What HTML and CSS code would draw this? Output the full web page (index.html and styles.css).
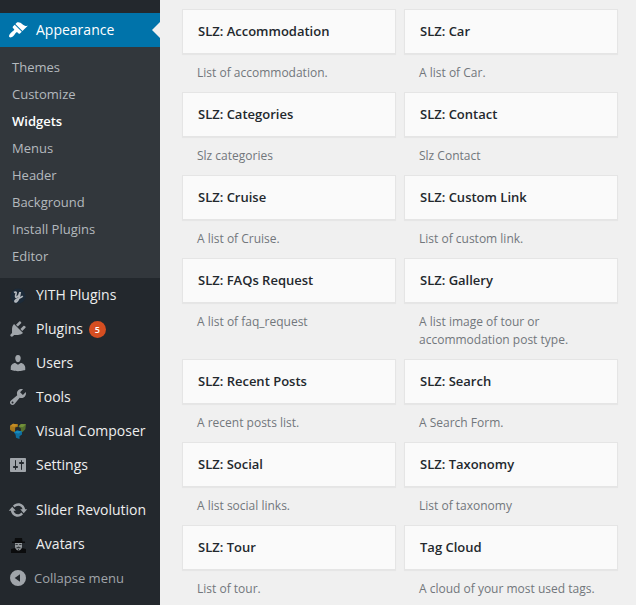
FILE: index.html
```html
<!DOCTYPE html>
<html lang="en">
<head>
<meta charset="utf-8">
<title>Widgets</title>
<link rel="stylesheet" href="styles.css">
</head>
<body>
<nav class="sidebar">
  <a class="item current"><svg class="icon" viewBox="0 0 20 20"><path d="M14.48 11.06L7.41 3.99l1.5-1.5c.5-.56 2.3-.47 3.51.32 1.21.8 1.43 1.28 2.91 2.1 1.18.64 2.45 1.26 4.45.85zm-.71.71L6.7 4.7 4.93 6.47c-.39.39-.39 1.02 0 1.41l1.06 1.06c.39.39.39 1.03 0 1.42-.6.6-1.43 1.11-2.21 1.69-.35.26-.7.53-1.01.84C1.43 14.23.4 16.08 1.4 17.07c.99 1 2.84-.03 4.18-1.36.31-.31.58-.66.85-1.02.57-.78 1.08-1.61 1.69-2.21.39-.39 1.02-.39 1.41 0l1.06 1.06c.39.39 1.02.39 1.41 0z"/></svg>Appearance</a>
  <div class="submenu">
    <a>Themes</a><a>Customize</a><a class="active">Widgets</a><a>Menus</a><a>Header</a><a>Background</a><a>Install Plugins</a><a>Editor</a>
  </div>
  <a class="item"><svg class="icon" viewBox="0 0 20 20"><circle cx="10" cy="11" r="7.6" fill="#1c2a38"/><path d="M6 7.6c1.8-1 2.6-.4 2 1.500-.8 2.600-.5 3.700 1 3 1.500-.7 2.500-2.600 3-4.800M12.300 7c-.5 3.600-1.300 8.400-3.800 9.700-1.700.8-2.200-.7-.7-1.800 2-1.400 4.500-1.600 7-3.800" fill="none" stroke="#b4b9be" stroke-width="1.700"/></svg>YITH Plugins</a>
  <a class="item"><svg class="icon" viewBox="0 0 20 20"><path d="M13.110 4.360L9.870 7.600 8 5.730l3.240-3.240c.35-.34 1.050-.2 1.560.32.52.51.66 1.210.31 1.550zm-8 1.770l.91-1.120 9.010 9.010-1.190.84c-.71.71-2.630 1.160-3.820 1.160H6.140L4.900 17.260c-.59.59-1.540.59-2.120 0-.59-.58-.59-1.530 0-2.120l1.240-1.240v-3.880c0-1.130.4-3.190 1.090-3.890zm7.260 3.970l3.240-3.240c.34-.35 1.040-.21 1.550.31.52.51.66 1.210.31 1.550l-3.240 3.250z"/></svg>Plugins<span class="count">5</span></a>
  <a class="item"><svg class="icon" viewBox="0 0 20 20"><path d="M10 9.250c-2.270 0-2.730-3.440-2.730-3.440C7 4.020 7.820 2 9.970 2c2.160 0 2.980 2.020 2.710 3.810 0 0-.41 3.440-2.680 3.440zm0 2.570L12.720 10c2.390 0 4.520 2.330 4.520 4.530v2.490s-3.650 1.130-7.240 1.130c-3.650 0-7.240-1.130-7.240-1.130v-2.490c0-2.250 1.940-4.480 4.470-4.480z"/></svg>Users</a>
  <a class="item"><svg class="icon" viewBox="0 0 20 20"><path d="M16.680 9.770c-1.340 1.340-3.300 1.670-4.950.99l-5.410 6.520c-.99.99-2.590.99-3.580 0s-.99-2.590 0-3.570l6.520-5.420c-.68-1.650-.35-3.610.99-4.950 1.280-1.280 3.120-1.620 4.720-1.060l-2.890 2.890 2.820 2.820 2.860-2.870c.53 1.580.18 3.390-1.080 4.650zM3.810 16.210c.4.39 1.040.39 1.430 0 .4-.4.4-1.040 0-1.430-.39-.4-1.030-.4-1.430 0-.39.39-.39 1.030 0 1.430z"/></svg>Tools</a>
  <a class="item"><svg class="icon" viewBox="0 0 20 20"><path fill="#a8781c" d="M2 5l3-2.200 5 .8-.2 2.200-2.600.7L7 11l-3-.7L2 8.500z"/><path fill="#c58d23" d="M2 5l3-2.200 5 .8L6.500 6z"/><path fill="#55702e" d="M10.500 5.500L13 3l5 .2-.7 5-3 3-1.600-.5.3-3z"/><path fill="#72913a" d="M10.500 5.500L13 3l5 .2-3.300 3z"/><path fill="#0e6e9f" d="M6 11.500l3-2 5 1v3l-2.500 1.700V18L8 16.700l-.4-3z"/><path fill="#168abd" d="M6 11.500l3-2 5 1-3.500 2z"/></svg>Visual Composer</a>
  <a class="item"><svg class="icon" viewBox="0 0 20 20"><path fill-rule="evenodd" d="M18 16V4c0-.55-.45-1-1-1H3c-.55 0-1 .45-1 1v12c0 .55.45 1 1 1h14c.55 0 1-.45 1-1zM8 11h1c.55 0 1 .45 1 1s-.45 1-1 1H8v1.500c0 .28-.22.5-.5.5s-.5-.22-.5-.5V13H6c-.55 0-1-.45-1-1s.45-1 1-1h1V5.500c0-.28.22-.5.5-.5s.5.22.5.5V11zm5-2h-1c-.55 0-1-.45-1-1s.45-1 1-1h1V5.500c0-.28.22-.5.5-.5s.5.22.5.5V7h1c.55 0 1 .45 1 1s-.45 1-1 1h-1v5.500c0 .28-.22.5-.5.5s-.5-.22-.5-.5V9z"/></svg>Settings</a>
  <a class="item spaced"><svg class="icon" viewBox="0 0 20 20"><path d="M10.200 3.280c3.530 0 6.430 2.610 6.920 6h2.080l-3.500 4-3.500-4h2.320c-.45-1.970-2.210-3.450-4.320-3.450-1.450 0-2.730.71-3.540 1.780L4.950 5.660C6.230 4.200 8.110 3.280 10.200 3.280zm-.4 13.440c-3.520 0-6.430-2.610-6.920-6H.8l3.500-4c1.170 1.330 2.330 2.670 3.500 4H5.480c.45 1.970 2.210 3.450 4.320 3.450 1.450 0 2.730-.71 3.540-1.780l1.710 1.950c-1.280 1.460-3.150 2.380-5.250 2.380z"/></svg>Slider Revolution</a>
  <a class="item"><svg class="icon" viewBox="0 0 20 20"><path fill="#0b0c0d" d="M7 4h7l.5 3.500H17V9H4V7.500h2.500zM3 15l4-1h7l4 1v4H3z"/><path fill="#92979b" d="M7 9h7v3.500c0 2-1.500 4-3.500 4S7 14.500 7 12.500z"/><path d="M7.500 10h2.300v1H7.500zM11.200 10h2.300v1h-2.300zM8.300 13.500l2.200-.9 2.200.9v.7H8.300zM10 15h1v1.500h-1z" fill="#34383b"/></svg>Avatars</a>
  <a class="item collapse"><svg class="icon" viewBox="0 0 20 20"><path fill-rule="evenodd" d="M10 2a8 8 0 1 1 0 16 8 8 0 0 1 0-16zM12 6.200L6.700 10l5.300 3.800z"/></svg>Collapse menu</a>
</nav>
<main class="widgets">
  <section class="widget"><h3>SLZ: Accommodation</h3><p>List of accommodation.</p></section>
  <section class="widget"><h3>SLZ: Car</h3><p>A list of Car.</p></section>
  <section class="widget"><h3>SLZ: Categories</h3><p>Slz categories</p></section>
  <section class="widget"><h3>SLZ: Contact</h3><p>Slz Contact</p></section>
  <section class="widget"><h3>SLZ: Cruise</h3><p>A list of Cruise.</p></section>
  <section class="widget"><h3>SLZ: Custom Link</h3><p>List of custom link.</p></section>
  <section class="widget"><h3>SLZ: FAQs Request</h3><p>A list of faq_request</p></section>
  <section class="widget"><h3>SLZ: Gallery</h3><p>A list image of tour or accommodation post type.</p></section>
  <section class="widget"><h3>SLZ: Recent Posts</h3><p>A recent posts list.</p></section>
  <section class="widget"><h3>SLZ: Search</h3><p>A Search Form.</p></section>
  <section class="widget"><h3>SLZ: Social</h3><p>A list social links.</p></section>
  <section class="widget"><h3>SLZ: Taxonomy</h3><p>List of taxonomy</p></section>
  <section class="widget"><h3>SLZ: Tour</h3><p>List of tour.</p></section>
  <section class="widget"><h3>Tag Cloud</h3><p>A cloud of your most used tags.</p></section>
</main>
</body>
</html>
```
FILE: styles.css
```css
* { box-sizing: border-box; }
body {
  margin: 0;
  height: 605px;
  display: flex;
  overflow: hidden;
  background: #f0f0f0;
  font-family: "Open Sans", sans-serif;
}
.sidebar {
  width: 160px;
  flex: none;
  padding-top: 13px;
  background: #23282d;
}
.item {
  display: flex;
  align-items: center;
  height: 34px;
  padding-left: 8px;
  color: #eee;
  font-size: 14px;
  line-height: 18px;
  white-space: nowrap;
}
.icon {
  width: 20px;
  height: 20px;
  margin-right: 8px;
  flex: none;
  fill: #a0a5aa;
}
.current {
  position: relative;
  background: #0073aa;
  color: #fff;
}
.current .icon { fill: #fff; }
.current::after {
  content: "";
  position: absolute;
  right: 0;
  top: 9px;
  border: 8px solid transparent;
  border-left: 0;
  border-right-color: #f0f0f0;
}
.submenu {
  height: 231px;
  padding-top: 7px;
  background: #32373c;
}
.submenu a {
  display: block;
  height: 27px;
  padding-left: 12px;
  color: #b4b9be;
  font-size: 13px;
  line-height: 27px;
}
.submenu .active { color: #fff; font-weight: 600; }
.spaced { margin-top: 11px; }
.count {
  width: 17px;
  height: 17px;
  margin-left: 6px;
  border-radius: 50%;
  background: #d54e21;
  color: #fff;
  font-size: 9px;
  font-weight: 600;
  line-height: 17px;
  text-align: center;
}
.collapse { color: #a0a5aa; font-size: 13px; }
.collapse .icon { margin-right: 6px; }
.widgets {
  display: grid;
  grid-template-columns: 214px 214px;
  column-gap: 8px;
  align-content: start;
  padding: 9px 0 0 22px;
}
.widget h3 {
  height: 45px;
  margin: 0;
  padding: 0 15px;
  border: 1px solid #e5e5e5;
  box-shadow: 0 1px 1px rgba(0, 0, 0, .04);
  background: #fafafa;
  color: #23282d;
  font-size: 13px;
  font-weight: 600;
  line-height: 43px;
}
.widget p {
  margin: 0;
  padding: 10px 15px;
  color: #72777c;
  font-size: 12px;
  line-height: 18px;
}
```
